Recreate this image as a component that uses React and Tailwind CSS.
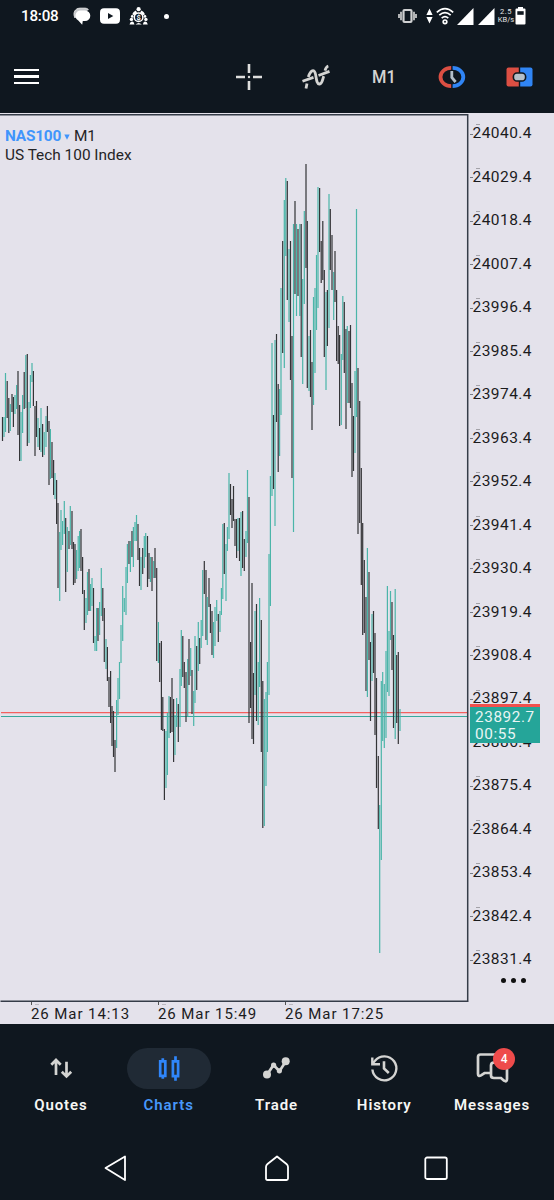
import React from 'react';

// one bar per entry: x, high, low, direction (u = up, d = down)
const BARS = `
2.5,417,441,d 4,417,437,u 5.5,373,432,u 7.2,381,418,d 8.8,398,433,d 10.3,404,431,u 12,394,412,d 13.4,397,427,d
15,395,414,u 16.6,385,409,u 18,371,435,d 19.6,405,461,d 21,412,461,u 22.6,395,433,u 24.2,372,409,d 25.8,355,408,u
27.3,354,446,d 29,402,443,u 30.4,375,408,u 32,363,382,u 33.4,371,406,d 35,406,456,d 36.5,401,437,d 38,418,447,u
39.6,428,450,d 41,408,452,u 42.6,424,457,d 44.2,432,455,u 46,416,447,u 47.4,406,432,d 49,421,485,d 50.4,429,479,u
52,442,478,d 53.6,460,495,d 55,473,499,u 56.6,480,524,d 58,503,588,d 59.7,532,601,u 61,510,550,u 62.6,521,545,u
64.3,501,534,u 65.7,518,592,d 67.3,527,572,u 69,531,549,d 70.3,506,545,u 72,511,549,d 73.5,542,585,d 75,544,583,d
76.6,550,579,u 78.2,536,571,u 79.6,531,568,u 81,529,571,d 82.6,557,594,d 84.3,590,630,d 86,598,623,u 87.5,572,615,u
89,569,611,d 90.6,584,611,u 92,578,606,u 93.5,588,643,d 95,636,651,u 96.6,608,651,u 98,608,641,d 99.6,602,635,u
101.3,568,616,u 102.8,588,621,d 104.3,608,662,d 106,639,669,u 107.4,647,681,d 109,677,707,d 110.6,671,723,d
112,706,746,d 113.5,711,757,d 115,740,772,d 116.6,700,748,u 118,678,715,u 119.5,662,699,u 121,625,663,u
122.7,586,641,u 124.3,598,612,u 126,567,615,u 127.4,544,583,u 129,541,564,d 130.4,541,572,u 132,531,557,d
133.4,527,567,u 135,522,541,u 136.5,515,541,u 138,524,560,d 139.5,548,586,d 141,557,590,u 142.7,548,574,d
144.3,536,568,u 145.7,533,557,u 147.5,536,587,d 149,553,579,d 150.4,557,582,u 152,557,591,d 153.7,561,578,u
155,548,578,d 156.7,568,661,d 158.4,622,663,u 159.7,643,682,d 161.4,641,730,d 162.8,697,731,d 164.4,729,800,d
166,731,788,u 167.4,713,775,u 169,696,738,u 170.4,697,733,d 172,678,732,d 173.6,699,762,d 175,715,755,u
176.6,698,727,u 178.3,704,742,d 180,669,727,u 181.3,630,686,u 182.8,636,677,d 184.3,662,688,d 186,672,722,d
187.7,659,716,u 189,639,685,d 190.7,648,676,u 192,670,714,d 193.7,691,726,u 195,636,703,u 196.7,646,690,d
198.3,622,671,u 199.7,638,664,d 201.2,620,648,u 202.7,570,636,u 204.3,561,594,d 206,570,640,d 207.3,597,645,u
209,578,607,d 210.4,604,633,d 212,611,655,d 213.5,622,658,u 215,607,646,u 216.7,600,621,u 218.3,614,642,d
220,611,632,u 221.4,588,615,u 222.8,524,599,u 224.3,523,574,d 226,544,601,u 227.4,527,551,u 229,473,539,u
230.5,484,515,d 232,499,528,d 233.5,486,521,d 235,519,546,d 236.6,519,558,d 238,518,551,u 239.5,518,561,d
241,512,576,u 242.6,511,568,d 244.3,539,571,d 246,531,557,u 247.5,470,543,u 249,497,723,d 250.6,642,708,d
252,583,739,d 253.5,673,744,d 255,611,695,u 256.5,604,721,d 258.2,662,725,u 259.6,598,687,u 261.3,620,752,d
262.8,681,828,d 264.3,699,826,u 266,692,786,u 267.4,662,752,u 269,554,695,u 270.4,476,606,u 272,343,496,u
273.5,415,489,d 275,340,526,u 276.5,334,422,d 278.2,384,472,d 279.6,389,456,u 281,288,415,u 282.7,241,353,d
284.3,200,368,u 285.8,178,256,u 287.3,181,300,d 289,249,322,u 290.5,241,380,d 292,336,478,d 293.5,224,532,u
295,201,294,d 296.5,224,316,u 298,229,296,d 299.8,224,316,u 301.2,224,357,d 302.7,279,384,u 304.3,211,304,u
306,164,268,d 307.3,221,388,d 309,336,391,u 310.5,330,397,d 312,362,430,d 313.5,297,405,u 315,288,373,u
316.5,255,330,u 318,187,308,u 319.6,188,252,d 321.2,241,283,d 322.8,221,280,d 324.3,270,357,d 326,292,390,u
327.4,290,346,d 329,194,328,u 330.3,209,270,d 332,235,290,d 333.7,272,320,u 335,251,302,d 336.6,290,361,d
338.2,326,364,d 339.6,335,426,d 341.3,354,425,u 342.8,296,360,u 344.3,302,373,d 346,329,429,d 347.3,326,403,u
349,331,403,d 350.5,325,408,d 352,383,477,d 353.5,416,471,d 355,371,453,u 356.5,209,417,u 358,368,534,d
359.7,401,523,d 361.3,468,585,d 362.7,523,635,d 364.3,560,633,d 366,597,691,d 367.4,548,697,u 369,572,660,d
370.5,642,721,d 372,614,681,u 373.5,611,673,d 375,633,735,d 376.5,678,788,d 378.3,756,829,d 379.7,805,953,u
381.3,681,860,u 382.7,672,741,u 384.3,684,748,u 386,651,738,u 387.4,586,692,u 389,631,696,u 390.5,591,640,u
392,602,670,d 393.5,635,728,d 395.2,589,739,u 396.7,655,723,d 398.3,652,744,d 400,709,731,u`
  .trim()
  .split(/\s+/)
  .map((s) => {
    const [x, high, low, dir] = s.split(',');
    return { x: +x, high: +high, low: +low, up: dir === 'u' };
  });

const PRICES = Array.from({ length: 20 }, (_, i) => (24040.4 - i * 11).toFixed(1));

const TIMES = ['26 Mar 14:13', '26 Mar 15:49', '26 Mar 17:25'];

const StatusBar = () => (
  <div className="h-8 flex items-center justify-between pl-[21px] pr-7 text-white">
    <div className="flex items-center">
      <span className="w-[38px] pt-px text-[15.2px] leading-none font-medium tracking-[-.2px] whitespace-nowrap">18:08</span>
      <svg className="ml-[14px]" width="18" height="18" viewBox="0 0 18 18">
        <path d="M2 11 C-0.5 6 2 1.2 7 1.2 H12 C14 1.2 15 2 15.5 3" fill="#c5c7ca" stroke="#e8e8e8" strokeWidth="1" />
        <path d="M8 3.4 H12 A5 5 0 0 1 12 14 H9.8 L9.2 17.8 L5.3 13.4 A5.3 5.3 0 0 1 8 3.4Z" fill="#fff" />
      </svg>
      <svg className="ml-[9px]" width="20" height="16" viewBox="0 0 20 16">
        <rect width="20" height="15.4" y=".3" rx="4" fill="#fff" />
        <path d="M8 5 L13.3 8 L8 11Z" fill="#0f171f" />
      </svg>
      <svg className="ml-[9px]" width="20" height="18" viewBox="0 0 20 18">
        <g fill="#fff">
          <circle cx="9.6" cy="2.2" r="2.1" />
          <path d="M5.5 8.5 L3.2 7.2 Q4.2 4.6 6.8 3.6 L8 5.5Z M13.7 8.5 L16 7.2 Q15 4.6 12.4 3.6 L11.2 5.5Z" />
          <circle cx="3.2" cy="9.4" r="1.3" />
          <circle cx="16" cy="9.4" r="1.3" />
          <circle cx="2.4" cy="12.4" r="1.7" />
          <circle cx="16.9" cy="12.4" r="1.7" />
          <path d="M.5 17.5 Q1.5 13.5 4.5 15 L5.5 17.5Z M18.8 17.5 Q17.8 13.5 14.8 15 L13.8 17.5Z M6.5 17.5 Q9.6 14.5 12.8 17.5Z" />
        </g>
        <circle cx="9.6" cy="10.2" r="4.3" fill="#0f171f" stroke="#fff" strokeWidth="1.5" />
        <text x="9.6" y="12.8" textAnchor="middle" fontSize="7.5" fontWeight="700" fill="#fff">$</text>
      </svg>
      <span className="ml-[15px] size-[5px] rounded-full bg-white" />
    </div>
    <div className="flex items-center">
      <svg width="19" height="16" viewBox="0 0 19 16">
        <rect x="5.5" y="2" width="8" height="12" rx="1" fill="none" stroke="#cfd0d1" strokeWidth="2.2" />
        <path d="M3 3.8 V12.2 M16 3.8 V12.2 M1 6 V10 M18 6 V10" stroke="#cfd0d1" strokeWidth="1.7" />
      </svg>
      <svg className="ml-[9px]" width="7" height="16" viewBox="0 0 7 16">
        <path d="M3.5 .6 L6.6 7 H.4Z M3.5 15.4 L6.6 9 H.4Z" fill="#fff" />
      </svg>
      <svg className="ml-[3px]" width="18" height="18" viewBox="0 0 18 18" fill="none" stroke="#fff" strokeWidth="1.7">
        <path d="M.8 5.3 Q9 -2 17.2 5.3 M3.3 8.2 Q9 3 14.7 8.2 M5.7 11.2 Q9 8.2 12.3 11.2" />
        <circle cx="9" cy="14.8" r="1.8" />
      </svg>
      <svg className="ml-[3px]" width="17" height="17" viewBox="0 0 17 17">
        <path d="M16.5 0 V17 H0Z" fill="#fff" />
      </svg>
      <svg className="ml-[4px]" width="17" height="17" viewBox="0 0 17 17">
        <path d="M16.5 0 V17 H0Z" fill="#fff" />
      </svg>
      <div className="ml-[3px] w-4 text-[7.5px] leading-[8px] text-center whitespace-nowrap text-[#e4e4e4]">
        <div className="tracking-[.6px]">2.5</div>
        <div className="-mx-1">KB/s</div>
      </div>
      <svg className="ml-[1px]" width="11" height="18" viewBox="0 0 11 18">
        <path d="M3 0 H8 V1.5 H9.5 Q10.5 1.5 10.5 2.5 V16.5 Q10.5 17.5 9.5 17.5 H1.5 Q.5 17.5 .5 16.5 V2.5 Q.5 1.5 1.5 1.5 H3Z" fill="#fff" />
        <rect x="2.3" y="4.2" width="6.4" height="3.6" fill="#0f171f" />
      </svg>
    </div>
  </div>
);

const AppBar = () => (
  <div className="h-[81px] flex items-center pl-[14px] pt-2">
    <div className="flex flex-col gap-[3.7px]">
      <span className="h-[2.8px] w-[25px] bg-white" />
      <span className="h-[2.8px] w-[25px] bg-white" />
      <span className="h-[2.8px] w-[25px] bg-white" />
    </div>
    <div className="ml-auto flex items-center pr-px">
      <div className="w-[67.6px] flex justify-center">
        <svg width="28" height="28" viewBox="0 0 28 28" stroke="#dededd" strokeWidth="2.6">
          <path d="M14 1 V10 M14 18 V27 M1 14 H10 M18 14 H27" />
          <circle cx="14" cy="14" r="1.2" fill="#dededd" stroke="none" />
        </svg>
      </div>
      <div className="w-[67.6px] flex justify-center">
        <svg width="28" height="26" viewBox="0 0 28 26" fill="none" stroke="#d4d4d2" strokeWidth="2.8">
          <path d="M.5 17.2 L11.5 13.4 M16.5 11.5 L27.5 7.4" />
          <path d="M4 24.5 L5 19.5 M6.3 13 C8.5 6.5 11.5 5 13 8.5 C14.5 12 14 20.5 17.5 20 C20.5 19.5 20.5 15 21.8 12.2 M23 6.6 C23.6 4.2 24.4 2.6 26.3 2" />
        </svg>
      </div>
      <div className="w-[67.6px] flex justify-center pt-[2px]">
        <span className="text-[16.5px] leading-none font-medium text-[#d4d4d2] scale-y-[1.15]">M1</span>
      </div>
      <div className="w-[67.6px] flex justify-center">
        <svg width="28" height="24" viewBox="0 0 28 24" fill="none">
          <path d="M13.2 1 A12.6 11 0 0 0 13.2 23 V19.3 A8.8 7.3 0 0 1 13.2 4.7Z" fill="#dc4f43" />
          <path d="M14.6 1 A12.6 11 0 0 1 14.6 23 V19.3 A8.8 7.3 0 0 0 14.6 4.7Z" fill="#3085f5" />
          <path d="M13.8 6 V12.5 L17.6 17" stroke="#b4bfc9" strokeWidth="2.8" />
        </svg>
      </div>
      <div className="w-[67.6px] flex justify-center">
        <svg width="27" height="20" viewBox="0 0 27 20">
          <path d="M2.5 .5 H12.8 V19.5 H2.5 Q.5 19.5 .5 17.5 V2.5 Q.5 .5 2.5 .5Z" fill="#dc4f43" />
          <path d="M14.2 .5 H24.5 Q26.5 .5 26.5 2.5 V17.5 Q26.5 19.5 24.5 19.5 H14.2Z" fill="#3085f5" />
          <rect x="7.4" y="6" width="12.2" height="8" rx="3.6" fill="#b4bfc9" stroke="#0f171f" strokeWidth="1.6" />
        </svg>
      </div>
    </div>
  </div>
);

const Plot = () => (
  <svg className="block shrink-0" width="470" height="889" viewBox="0 113 470 889">
    <g strokeWidth="1.2">
      <path d="M1 712.7 H467" stroke="#f4605f" />
      <path d="M1 716.5 H467" stroke="#37a99c" />
    </g>
    {BARS.map((b) => (
      <rect
        key={b.x}
        x={b.x - 0.6}
        y={b.high}
        width="1.2"
        height={b.low - b.high}
        fill={b.up ? '#4bb5a9' : '#343437'}
      />
    ))}
    <path d="M0 114.7 H467.7 M467.7 114 V1002 M0.5 1001.3 H468.5" stroke="#353c48" strokeWidth="1.5" fill="none" />
  </svg>
);

const PriceAxis = () => (
  <div className="relative flex-1 h-[889px]">
    <div className="-mt-[.6px] flex flex-col">
      {PRICES.map((p) => (
        <div key={p} className="relative h-[43.47px] flex items-center">
          <span className="w-[2.5px] h-px bg-[#777b84]" />
          <span className="text-[15.5px] leading-none tracking-[.45px] text-[#1b1b1d]">{p}</span>
          <span className="absolute left-[6px] top-[12px] w-[4px] h-px bg-[#a3a2a8]" />
        </div>
      ))}
    </div>
    {/* Current price */}
    <div className="absolute left-0 top-[591px] w-[69.5px] h-[39px] bg-[#25a599] border-t-[3.5px] border-[#f0504d] pl-[5px] pt-[1.5px] text-[15.3px] leading-[17.6px] tracking-[.6px] text-[#e9f5f4]">
      <div>23892.7</div>
      <div>00:55</div>
    </div>
    <div className="absolute left-[31px] top-[864.5px] flex gap-[5px]">
      <span className="size-[5px] rounded-full bg-[#111]" />
      <span className="size-[5px] rounded-full bg-[#111]" />
      <span className="size-[5px] rounded-full bg-[#111]" />
    </div>
  </div>
);

const Chart = () => (
  <div className="relative h-[911px] bg-[#e4e2eb]">
    <div className="flex">
      <Plot />
      <PriceAxis />
    </div>
    {/* Time axis */}
    <div className="flex pl-[31px]">
      {TIMES.map((t) => (
        <div key={t} className="relative w-[127px] pt-[4px]">
          <span className="absolute left-0 top-0 h-[3px] w-px bg-[#555]" />
          <span className="absolute left-[4px] top-[2px] h-px w-[4px] bg-[#bbb9c1]" />
          <span className="block text-[15px] leading-[17px] tracking-[.92px] whitespace-nowrap text-[#1b1b1d]">{t}</span>
        </div>
      ))}
    </div>
    <div className="absolute left-[5px] top-[14px] text-[15.4px] leading-[19px] text-[#242426] whitespace-nowrap">
      <div className="flex items-center">
        <span className="font-bold tracking-[-.2px] text-[#4095fc]">NAS100</span>
        <svg className="ml-[3px] mr-[4px]" width="6" height="6" viewBox="0 0 6 6">
          <path d="M.3 .5 H5.7 L3 5.8Z" fill="#4095fc" />
        </svg>
        <span className="tracking-[-.4px]">M1</span>
      </div>
      <div>US Tech 100 Index</div>
    </div>
  </div>
);

const NavIcon = ({ children, color = '#d4d4d2' }) => (
  <svg width="84" height="41" viewBox="0 0 84 41" fill="none" stroke={color} strokeWidth="2.7">
    {children}
  </svg>
);

const TABS = [
  {
    label: 'Quotes',
    icon: (
      <NavIcon>
        <path d="M37 27 V12.5 M32.3 16.8 L37 12 L41.7 16.8 M47.5 13.7 V28 M42.8 23.7 L47.5 28.4 L52.2 23.7" />
      </NavIcon>
    ),
  },
  {
    label: 'Charts',
    active: true,
    icon: (
      <NavIcon color="#2f86fb">
        <path d="M33.2 13.3 H38.3 V27.8 H33.2Z M45.9 13.3 H51.1 V28.2 H45.9Z M35.8 10.3 V13 M35.8 28 V30.7 M48.5 8.3 V13 M48.5 28 V32.8" />
      </NavIcon>
    ),
  },
  {
    label: 'Trade',
    icon: (
      <NavIcon>
        <path d="M33 26.7 L39.5 17 L45.5 23.2 L51.7 13.5" />
        <g fill="#d4d4d2" stroke="none">
          <circle cx="33" cy="26.5" r="4" />
          <circle cx="51.7" cy="13.3" r="4" />
          <circle cx="39.6" cy="17.2" r="2.6" />
          <circle cx="45.4" cy="22.8" r="2.6" />
        </g>
      </NavIcon>
    ),
  },
  {
    label: 'History',
    icon: (
      <NavIcon>
        <path d="M30.4 21.5 A12 12 0 1 0 33 12.8 L30.8 15.2" strokeWidth="2.4" />
        <path d="M30.3 9.5 V16.3 H38" strokeWidth="2.4" />
        <path d="M42 13.3 V20.5 L46.8 25" strokeWidth="2.6" />
      </NavIcon>
    ),
  },
  {
    label: 'Messages',
    badge: 4,
    icon: (
      <NavIcon>
        <path d="M41 25 H34.5 L31 27.3 Q28 29 28 26 V9 Q28 6.5 30.5 6.5 H46 Q48.5 6.5 48.5 9 V14" />
        <path d="M44 14.5 H54.5 Q57 14.5 57 17 V31 Q57 34.5 54 32.7 L51 30 H44 Q41 30 41 27.5 V17.5 Q41 14.5 44 14.5Z" />
      </NavIcon>
    ),
  },
];

const BottomNav = () => (
  <nav className="h-[112px] flex pl-[7px] pr-[8px] pt-6">
    {TABS.map((tab) => (
      <button key={tab.label} className="flex-1 flex flex-col items-center">
        <div className={`relative w-[84px] h-[41px] rounded-full ${tab.active ? 'bg-[#202a35]' : ''}`}>
          {tab.icon}
          {tab.badge && (
            <span className="absolute left-[43px] top-[.3px] size-[22px] rounded-full bg-[#ee4b4b] text-white text-xs font-medium flex items-center justify-center">
              {tab.badge}
            </span>
          )}
        </div>
        <span
          className={`mt-[7px] text-[15px] leading-[18px] font-semibold tracking-[.9px] ${
            tab.active ? 'text-[#4797fb]' : 'text-[#f6f6f4]'
          }`}
        >
          {tab.label}
        </span>
      </button>
    ))}
  </nav>
);

const SystemNav = () => (
  <div className="h-16 flex items-center justify-between pl-[103px] pr-[105px]">
    <svg width="26" height="28" viewBox="0 0 26 28" fill="none" stroke="#fff" strokeWidth="1.8" strokeLinejoin="round">
      <path d="M22 2.5 V26 L2.5 14Z" />
    </svg>
    <svg width="26" height="28" viewBox="0 0 26 28" fill="none" stroke="#fff" strokeWidth="1.8" strokeLinejoin="round">
      <path d="M14 2.5 L23.5 10 Q25 11.2 25 13 V24.5 Q25 26 23.5 26 H4.5 Q3 26 3 24.5 V13 Q3 11.2 4.5 10Z" />
    </svg>
    <svg width="26" height="26" viewBox="0 0 26 26" fill="none" stroke="#fff" strokeWidth="1.8">
      <rect x="2.3" y="2.5" width="21.5" height="21.5" rx="1.8" />
    </svg>
  </div>
);

const App = () => (
  <div className="w-[554px] h-[1200px] overflow-hidden bg-[#0f171f] font-['Roboto',sans-serif]">
    <StatusBar />
    <AppBar />
    <Chart />
    <BottomNav />
    <SystemNav />
  </div>
);

export default App;
